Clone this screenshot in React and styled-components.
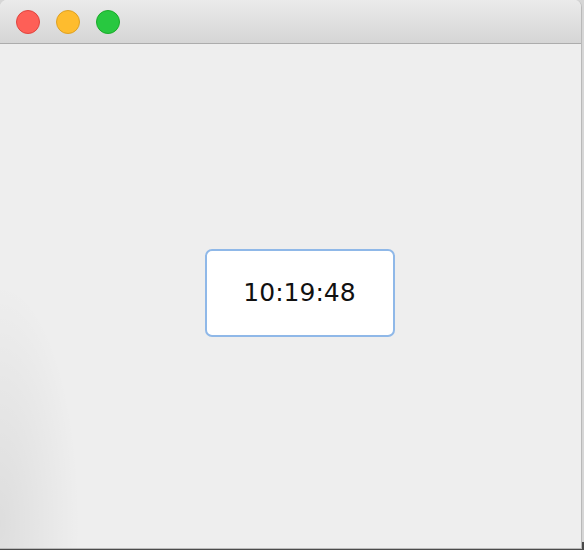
import React, { useEffect, useState } from "react";
import styled, { createGlobalStyle } from "styled-components";

const GlobalStyle = createGlobalStyle`
  html, body {
    margin: 0;
    padding: 0;
    background: #d4d4d4;
    font-family: "DejaVu Sans", "Liberation Sans", sans-serif;
  }
`;

const Desktop = styled.div`
  width: 584px;
  height: 550px;
  overflow: hidden;
  background: linear-gradient(to bottom, #d6d6d6 0%, #d6d6d6 98.5%, #4a4a4a 98.5%);
`;

const Window = styled.div`
  width: 581px;
  height: 548px;
  display: flex;
  flex-direction: column;
  border: 1px solid #b9b9b9;
  border-top: none;
  border-left: none;
  border-radius: 7px 7px 0 0;
  overflow: hidden;
  background: #eeeeee;
`;

const TitleBar = styled.div`
  height: 43px;
  flex-shrink: 0;
  display: flex;
  align-items: center;
  gap: 16px;
  padding-left: 16px;
  background: linear-gradient(to bottom, #ebebeb, #d5d5d5);
  border-bottom: 1px solid #acacac;
`;

const Light = styled.span`
  width: 24px;
  height: 24px;
  border-radius: 50%;
  background: ${(props) => props.color};
  border: 1px solid ${(props) => props.edge};
  box-sizing: border-box;
`;

const Content = styled.div`
  flex: 1;
  display: flex;
  align-items: center;
  justify-content: center;
  padding: 0 0 7px 18px;
  background:
    radial-gradient(ellipse 80px 240px at 0% 95%, rgba(0, 0, 0, 0.07), rgba(0, 0, 0, 0) 100%),
    #eeeeee;
`;

const ClockBox = styled.div`
  width: 190px;
  height: 88px;
  box-sizing: border-box;
  display: flex;
  align-items: center;
  justify-content: center;
  background: #ffffff;
  border: 2px solid #8fb8e8;
  border-radius: 7px;
  font-size: 25px;
  color: #111111;
`;

export default function App() {
  const [time] = useState("10:19:48");
  useEffect(() => {}, []);
  return (
    <Desktop>
      <GlobalStyle />
      <Window>
        <TitleBar>
          <Light color="#fe5f57" edge="#e0443e" />
          <Light color="#febc2e" edge="#dea123" />
          <Light color="#28c840" edge="#1aab29" />
        </TitleBar>
        <Content>
          <ClockBox>{time}</ClockBox>
        </Content>
      </Window>
    </Desktop>
  );
}
